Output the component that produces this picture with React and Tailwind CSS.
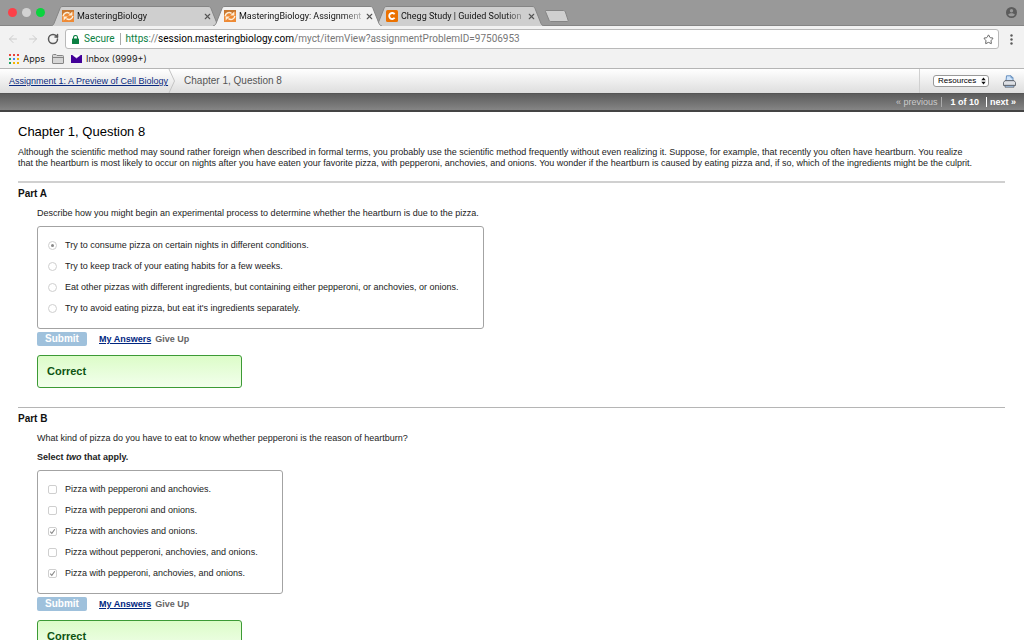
import React from 'react';
import { ArrowLeft, ArrowRight, RotateCw, Star, X } from 'lucide-react';

const tabs = [
    { title: 'MasteringBiology', icon: 'mastering', active: false },
    { title: 'MasteringBiology: Assignment', icon: 'mastering', active: true },
    { title: 'Chegg Study | Guided Solution', icon: 'chegg', active: false },
];

const partA = [
    { text: 'Try to consume pizza on certain nights in different conditions.', checked: true },
    { text: 'Try to keep track of your eating habits for a few weeks.' },
    { text: 'Eat other pizzas with different ingredients, but containing either pepperoni, or anchovies, or onions.' },
    { text: "Try to avoid eating pizza, but eat it's ingredients separately." },
];

const partB = [
    { text: 'Pizza with pepperoni and anchovies.' },
    { text: 'Pizza with pepperoni and onions.' },
    { text: 'Pizza with anchovies and onions.', checked: true },
    { text: 'Pizza without pepperoni, anchovies, and onions.' },
    { text: 'Pizza with pepperoni, anchovies, and onions.', checked: true },
];

const MasteringIcon = () => (
    <svg width="12" height="12" viewBox="0 0 12 12" className="shrink-0">
        <rect width="12" height="12" fill="#ee8a35" />
        <path d="M0 0H12V2L0 5Z" fill="#c9782f" />
        <path d="M1.2 6.2C1.4 3.2 4.6 1.6 7.6 3.4" fill="none" stroke="#fdeed8" strokeWidth="1.5" />
        <path d="M10.4 1.4V5.4H6.2Z" fill="#fdeed8" />
        <path d="M10.8 6C10.6 9 7.4 10.4 4.4 8.6" fill="none" stroke="#fdeed8" strokeWidth="1.5" />
        <path d="M1.6 10.6V6.6H5.8Z" fill="#fdeed8" />
    </svg>
);

const CheggIcon = () => (
    <svg width="12" height="12" viewBox="0 0 12 12" className="shrink-0">
        <rect width="12" height="12" rx="1.5" fill="#eb7100" />
        <path d="M8.6 4.2A3 3 0 1 0 8.6 7.8" fill="none" stroke="#fff" strokeWidth="1.8" />
    </svg>
);

const Tab = ({ title, icon, active }) => (
    <div className={`relative -mr-[7px] flex h-5 w-[169px] items-center pr-2 pl-[11px] ${active ? 'z-10' : ''}`}>
        <svg className="absolute inset-0 h-full w-full" viewBox="0 0 169 20" preserveAspectRatio="none">
            <path
                d="M0 20C2 19.5 2.5 18.5 3 17.5L9 2.5C9.6 1 10.2.5 12 .5H157C158.8.5 159.4 1 160 2.5L166 17.5C166.5 18.5 167 19.5 169 20"
                fill={active ? '#f2f2f2' : '#cfcfcf'}
                stroke="#858585"
                strokeWidth="1"
            />
        </svg>
        <div className="relative flex min-w-0 flex-1 items-center">
            {icon === 'chegg' ? <CheggIcon /> : <MasteringIcon />}
            <span className="ml-[3px] min-w-0 flex-1 font-['Roboto'] text-[9px] leading-3 whitespace-nowrap text-[#111] [mask-image:linear-gradient(to_right,#000_85%,#0004)]">
                {title}
            </span>
            <button type="button" aria-label="Close tab" className="ml-1 text-[#555]">
                <X size={9} strokeWidth={3} />
            </button>
        </div>
    </div>
);

const BrowserChrome = () => (
    <header className="font-['Roboto'] text-[#222]">
        <div className="flex h-[26px] items-end border-b border-[#858585] bg-[#999]">
            <div className="flex w-[51px] gap-[5px] self-center pl-2">
                <span className="h-[9px] w-[9px] rounded-full bg-[#fc4048]" />
                <span className="h-[9px] w-[9px] rounded-full bg-[#d2d2d2]" />
                <span className="h-[9px] w-[9px] rounded-full bg-[#0bd33e]" />
            </div>
            <div className="-mb-px flex">
                {tabs.map((tab) => (
                    <Tab key={tab.title} {...tab} />
                ))}
            </div>
            <button type="button" aria-label="New tab" className="mb-[3px] ml-2">
                <svg width="24" height="12" viewBox="0 0 24 12" className="block">
                    <path d="M1 .5H18.5C19.5.5 20 1 20.3 1.8L23 10C23.3 11 23 11.5 22 11.5H6C5 11.5 4.4 11 4 10L.6 1.8C.3 1 .3.5 1 .5Z" fill="#cfcfcf" stroke="#858585" />
                </svg>
            </button>
            <svg width="11" height="11" viewBox="0 0 11 11" className="mr-[7px] ml-auto self-center">
                <circle cx="5.5" cy="5.5" r="5.5" fill="#5c5c5c" />
                <circle cx="5.5" cy="3.7" r="1.7" fill="#999" />
                <path d="M2.2 7.8C2.8 5.8 8.2 5.8 8.8 7.8 7.5 9.8 3.5 9.8 2.2 7.8Z" fill="#999" />
            </svg>
        </div>

        <div className="flex items-center bg-[#f2f2f2] pt-[3px] pr-[11px]">
            <div className="flex w-[65px] items-center gap-2 pl-[7px]">
                <button type="button" aria-label="Back" className="text-[#ccc]"><ArrowLeft size={12} strokeWidth={2} /></button>
                <button type="button" aria-label="Forward" className="text-[#ccc]"><ArrowRight size={12} strokeWidth={2} /></button>
                <button type="button" aria-label="Reload" className="text-[#5a5a5a]"><RotateCw size={12} strokeWidth={3} /></button>
            </div>
            <div className="flex h-5 min-w-0 flex-1 items-center rounded-[3px] border border-[#b9b9b9] bg-white pr-1 pl-[6px] text-[10px] leading-4">
                <svg width="7" height="9" viewBox="0 0 7 9" className="shrink-0">
                    <rect y="3.5" width="7" height="5.5" rx="0.6" fill="#0b8043" />
                    <path d="M1.5 4V2.5A2 2 0 0 1 5.5 2.5V4" fill="none" stroke="#0b8043" strokeWidth="1.1" />
                </svg>
                <span className="ml-[5px] text-[#0b8043]">Secure</span>
                <span className="mx-[5px] h-3 w-px bg-[#aaa]" />
                <span className="flex-1 whitespace-nowrap text-[#777]">
                    <span className="text-[#0b8043]">https</span>://<span className="text-black">session.masteringbiology.com</span>/myct/itemView?assignmentProblemID=97506953
                </span>
                <button type="button" aria-label="Bookmark this page" className="text-[#5a5a5a]"><Star size={11} strokeWidth={2} /></button>
            </div>
            <button type="button" aria-label="Menu" className="ml-[11px]">
                <svg width="3" height="11" viewBox="0 0 3 11" fill="#5a5a5a">
                    <circle cx="1.5" cy="1.5" r="1.2" />
                    <circle cx="1.5" cy="5.5" r="1.2" />
                    <circle cx="1.5" cy="9.5" r="1.2" />
                </svg>
            </button>
        </div>

        <nav className="flex h-5 items-center border-b border-[#b5b5b5] bg-[#f2f2f2] pl-[9px] font-['Inter'] text-[9px] leading-3">
            <a href="#apps" className="flex items-center gap-1">
                <svg width="10" height="10" viewBox="0 0 10 10">
                    <path d="M0 0h2v2H0zM4 0h2v2H4zM8 0h2v2H8z" fill="#e8453c" />
                    <path d="M0 4h2v2H0z" fill="#1fa463" />
                    <path d="M4 4h2v2H4z" fill="#4688f1" />
                    <path d="M8 4h2v2H8zM4 8h2v2H4zM8 8h2v2H8z" fill="#f5b400" />
                    <path d="M0 8h2v2H0z" fill="#1fa463" />
                </svg>
                Apps
            </a>
            <button type="button" aria-label="Bookmark folder" className="ml-[7px]">
                <svg width="12" height="10" viewBox="0 0 12 10" className="block">
                    <path d="M.5 9V1.5Q.5.5 1.5.5H4L5 1.5H10.5Q11.5 1.5 11.5 2.5V9Q11.5 9.5 11 9.5H1Q.5 9.5.5 9ZM.5 3.5H11.5" fill="#d6d6d6" stroke="#858585" />
                </svg>
            </button>
            <a href="#inbox" className="ml-[7px] flex items-center gap-1">
                <svg width="11" height="8" viewBox="0 0 11 8">
                    <rect width="11" height="8" fill="#420098" />
                    <path d="M1.5 0L5.5 3 9.5 0" fill="#fff" stroke="#fff" strokeWidth="0.5" />
                </svg>
                Inbox (9999+)
            </a>
        </nav>
    </header>
);

const PrinterIcon = () => (
    <svg width="13" height="13" viewBox="0 0 13 13" className="block">
        <path d="M3 6L3.5.8H8L10 2.8V6" fill="#cfe4fb" stroke="#5a86b8" strokeWidth="0.9" />
        <path d="M8 .8V2.8H10" fill="none" stroke="#5a86b8" strokeWidth="0.8" />
        <path d="M2 5.5H11L12.500 7.500V10.5H.5V7.5Z" fill="#c9ccd2" stroke="#5e636b" strokeWidth="0.9" />
        <path d="M1 8H12" stroke="#f2f4f7" strokeWidth="1" />
        <path d="M2 10.5H11V12.2H2Z" fill="#a9c9ee" stroke="#5e636b" strokeWidth="0.8" />
    </svg>
);

const AssignmentBar = () => (
    <div>
        <div className="flex h-6 items-stretch bg-linear-to-b from-white to-[#dedede]">
            <a href="#assignment" className="self-center pl-[9px] text-[9px] leading-3 text-[#0a2a80] underline">
                Assignment 1: A Preview of Cell Biology
            </a>
            <svg width="8" height="24" viewBox="0 0 8 24">
                <path d="M1 0L6.5 12 1 24" fill="none" stroke="#c4c4c4" />
            </svg>
            <span className="ml-2 self-center text-[10px] leading-3 text-[#555]">Chapter 1, Question 8</span>
            <div className="ml-auto flex items-center border-l border-[#d0d0d0] pr-2 pl-[13px]">
                <div className="relative flex items-center">
                    <select
                        aria-label="Resources"
                        className="h-3 w-14 appearance-none rounded-[3px] border border-[#999] bg-white pl-1 text-[8px] leading-[10px] text-black"
                    >
                        <option>Resources</option>
                    </select>
                    <svg width="5" height="8" viewBox="0 0 5 8" className="pointer-events-none absolute right-[3px]">
                        <path d="M2.5 0.5L4.7 3.3H.3ZM2.5 7.5L.3 4.7H4.7Z" fill="#111" />
                    </svg>
                </div>
                <button type="button" aria-label="Print" className="ml-[14px]"><PrinterIcon /></button>
            </div>
        </div>
        <div className="flex h-[19px] items-center justify-end border-t border-b-2 border-t-[#555] border-b-[#444] bg-linear-to-b from-[#5c5c5c] to-[#858585] pr-2 text-[9px] leading-3 font-bold text-white">
            <span className="font-normal text-[#ccc]">« previous</span>
            <span className="mx-1 h-[10px] w-px bg-[#aaa]" />
            <span className="mx-1">1 of 10</span>
            <span className="mx-[3px] h-[10px] w-px bg-white" />
            <a href="#next">next »</a>
        </div>
    </div>
);

const Options = ({ type, name, items }) => (
    <fieldset className="flex w-fit flex-col gap-[9px] rounded-[3px] border border-[#a3a3a3] pt-3 pr-6 pb-[14px] pl-[10px]">
        {items.map((item) => (
            <label key={item.text} className="flex items-center text-[9px] leading-3">
                <span className="relative mr-2 flex h-[9px] w-[9px] items-center justify-center">
                    <input
                        type={type}
                        name={name}
                        defaultChecked={item.checked}
                        disabled
                        className={
                            type === 'radio'
                                ? 'h-[9px] w-[9px] appearance-none rounded-full border border-[#cfcfcf] bg-white'
                                : 'h-[9px] w-[9px] appearance-none rounded-[2px] border border-[#cfcfcf] bg-white'
                        }
                    />
                    {item.checked && type === 'radio' && (
                        <span className="absolute h-[3px] w-[3px] rounded-full bg-[#888]" />
                    )}
                    {item.checked && type === 'checkbox' && (
                        <svg width="9" height="9" viewBox="0 0 9 9" className="absolute">
                            <path d="M2.2 4.7L3.8 6.4 6.8 2.2" fill="none" stroke="#888" strokeWidth="1.1" />
                        </svg>
                    )}
                </span>
                {item.text}
            </label>
        ))}
    </fieldset>
);

const Part = ({ title, children }) => (
    <section className="border-t border-[#b5b5b5] pt-1 pb-[19px] first-of-type:border-t-2 first-of-type:border-[#d0d0d0]">
        <h2 className="text-[10px] leading-[13px] font-bold text-[#111]">{title}</h2>
        <div className="pl-[19px]">
            {children}
            <div className="mt-[3px] flex items-center text-[9px] leading-3 font-bold">
                <button type="button" className="h-[14px] w-[50px] rounded-[2px] bg-[#9fc1dc] text-[10px] leading-3 text-white">
                    Submit
                </button>
                <a href="#answers" className="ml-3 text-[#00267f] underline">My Answers</a>
                <a href="#giveup" className="ml-1 text-[#666]">Give Up</a>
            </div>
            <div className="mt-[9px] h-[33px] w-[205px] rounded-[3px] border border-[#3c9a35] bg-linear-to-b from-[#dcfcc8] to-[#f2ffec] pl-[9px] text-[11px] leading-[31px] font-bold text-[#0d5412]">
                Correct
            </div>
        </div>
    </section>
);

const App = () => (
    <div className="h-screen overflow-hidden bg-white font-['Liberation_Sans',sans-serif] text-[#222]">
        <BrowserChrome />
        <AssignmentBar />
        <main className="pt-3 pr-[19px] pl-[18px]">
            <h1 className="text-[13px] leading-4 text-black">Chapter 1, Question 8</h1>
            <p className="mt-[7px] mb-3 pr-8 text-[9px] leading-[11px]">
                Although the scientific method may sound rather foreign when described in formal terms, you probably use the scientific method frequently without even realizing it. Suppose, for example, that recently you often have heartburn. You realize that the heartburn is most likely to occur on nights after you have eaten your favorite pizza, with pepperoni, anchovies, and onions. You wonder if the heartburn is caused by eating pizza and, if so, which of the ingredients might be the culprit.
            </p>
            <Part title="Part A">
                <p className="my-[7px] text-[9px] leading-3">
                    Describe how you might begin an experimental process to determine whether the heartburn is due to the pizza.
                </p>
                <Options type="radio" name="partA" items={partA} />
            </Part>
            <Part title="Part B">
                <p className="my-[7px] text-[9px] leading-3">
                    What kind of pizza do you have to eat to know whether pepperoni is the reason of heartburn?
                </p>
                <p className="mb-[7px] text-[9px] leading-3 font-bold">
                    Select <em>two</em> that apply.
                </p>
                <Options type="checkbox" name="partB" items={partB} />
            </Part>
        </main>
    </div>
);

export default App;
